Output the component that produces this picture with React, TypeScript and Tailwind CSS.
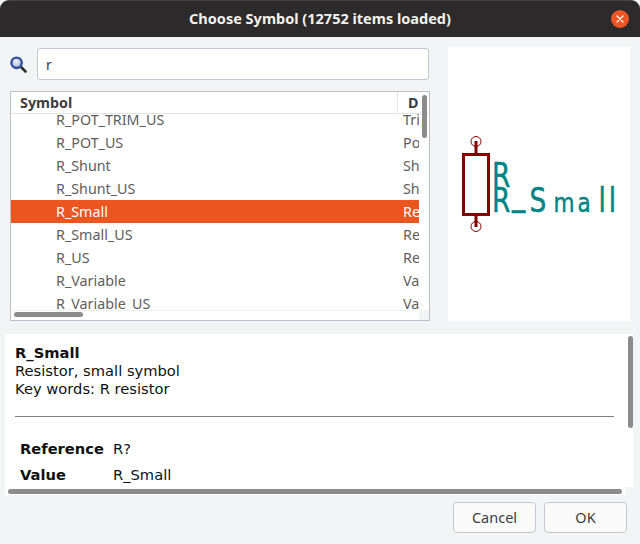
import React from 'react';

const rows = [
  { name: 'R_POT_TRIM_US', desc: 'Trimmer' },
  { name: 'R_POT_US', desc: 'Potentiometer' },
  { name: 'R_Shunt', desc: 'Shunt' },
  { name: 'R_Shunt_US', desc: 'Shunt' },
  { name: 'R_Small', desc: 'Resistor' },
  { name: 'R_Small_US', desc: 'Resistor' },
  { name: 'R_US', desc: 'Resistor' },
  { name: 'R_Variable', desc: 'Variable' },
  { name: 'R_Variable_US', desc: 'Variable' },
];

const uiFont = "font-['Noto_Sans','Open_Sans',sans-serif]";

const SearchIcon = () => (
  <svg width="17" height="17" viewBox="0 0 17 17" className="shrink-0">
    <defs>
      <radialGradient id="lens" cx="45%" cy="40%" r="60%">
        <stop offset="0%" stopColor="#f2f5fb" />
        <stop offset="60%" stopColor="#c3d0ea" />
        <stop offset="100%" stopColor="#6f8ccb" />
      </radialGradient>
    </defs>
    <line x1="10.500" y1="10.500" x2="15.500" y2="15.500" stroke="#2b2b2b" strokeWidth="2.600" strokeLinecap="round" />
    <circle cx="6.600" cy="6.800" r="5.200" fill="url(#lens)" stroke="#34519f" strokeWidth="2.400" />
  </svg>
);

const SymbolPreview = () => (
  <svg width="182" height="274" viewBox="0 0 182 274">
    <circle cx="28" cy="94.500" r="5" fill="none" stroke="#840000" strokeWidth="1" />
    <circle cx="28" cy="179.500" r="5" fill="none" stroke="#840000" strokeWidth="1" />
    <line x1="28" y1="94" x2="28" y2="107" stroke="#840000" strokeWidth="3" />
    <line x1="28" y1="167" x2="28" y2="180" stroke="#840000" strokeWidth="3" />
    <rect x="15.500" y="107.500" width="25" height="60" fill="none" stroke="#840000" strokeWidth="3" />
    <g fill="#008484" stroke="#008484" strokeWidth="0.500" fontFamily="'DejaVu Sans', sans-serif" fontSize="33" transform="scale(0.8 1)">
      <text x="55" y="140">R</text>
      <text y="165">
        <tspan x="55">R</tspan>
        <tspan x="80" dy="-7">_</tspan>
        <tspan x="102" dy="7">S</tspan>
        <tspan x="132" fontSize="27">m</tspan>
        <tspan x="162" fontSize="27">a</tspan>
        <tspan x="188">l</tspan>
        <tspan x="201">l</tspan>
      </text>
    </g>
  </svg>
);

export default function App() {
  return (
    <div className={`w-[640px] h-[544px] flex flex-col bg-[#f3f4f6] overflow-hidden ${uiFont}`}>
      {/* Title bar */}
      <div className="relative h-[37px] shrink-0 flex items-center justify-center bg-[#2c2a2a] rounded-t-[9px] border-t border-[#454343]">
        <span className="text-[14.500px] font-bold text-[#f4f2ef]">Choose Symbol (12752 items loaded)</span>
        <div className="absolute right-[11px] top-[9px] w-[18px] h-[18px] rounded-full bg-[#ee5522] flex items-center justify-center">
          <svg width="8" height="8" viewBox="0 0 8 8">
            <path d="M1 1L7 7M7 1L1 7" stroke="#ffffff" strokeWidth="1.200" strokeLinecap="round" />
          </svg>
        </div>
      </div>

      {/* Search, list and preview */}
      <div className="flex h-[284px] shrink-0 pl-[10px] pr-[10px] pt-[10px]">
        <div className="w-[420px] flex flex-col">
          <div className="flex items-center h-[33px] mt-[1px] mr-[1px]">
            <SearchIcon />
            <div className="ml-[10px] flex-1 h-[32px] bg-white border border-[#c2c6ce] rounded-[3px] flex items-center px-[8px] text-[14px] text-[#3d3d3d]">
              r
            </div>
          </div>
          <div className="relative mt-[10px] h-[231px] bg-white border border-[#bcc0c8] overflow-hidden text-[14.300px]">
            <div className="flex h-[22px] border-b border-[#e4e4e4] font-bold text-[#3d3d3d] pr-[10px]">
              <div className="w-[387px] pl-[9px] leading-[21px] border-r border-[#e4e4e4]">Symbol</div>
              <div className="pl-[10px] leading-[21px] overflow-hidden">D</div>
            </div>
            <div className="h-[196px] overflow-hidden mr-[10px]">
              <div className="-mt-[6px]">
                {rows.map(row => (
                  <div
                    key={row.name}
                    className={`flex h-[23px] leading-[23px] ${row.name === 'R_Small' ? 'bg-[#eb5620] text-white' : 'text-[#5e5e5e]'}`}
                  >
                    <div className="w-[392px] pl-[45px] whitespace-nowrap">{row.name}</div>
                    <div className="flex-1 overflow-hidden whitespace-nowrap">{row.desc}</div>
                  </div>
                ))}
              </div>
            </div>
            <div className="h-[11px] border-t border-[#efefef] mr-[10px]" />
            <div className="absolute right-0 bottom-0 w-[10px] h-[10px] bg-[#f3f4f6]" />
            <div className="absolute right-[2px] top-[3px] w-[5px] h-[43px] rounded-full bg-[#8c8c8c]" />
            <div className="absolute left-[3px] bottom-[3px] w-[69px] h-[5px] rounded-full bg-[#8c8c8c]" />
          </div>
        </div>
        <div className="ml-[18px] w-[182px] h-[274px] bg-white">
          <SymbolPreview />
        </div>
      </div>

      {/* Details */}
      <div className="relative mt-[13px] ml-[5px] w-[628px] h-[161px] shrink-0 bg-white overflow-hidden font-['DejaVu_Sans',sans-serif] text-[14.700px] text-[#111111]">
        <div className="pl-[10px] pt-[10px] leading-[18px]">
          <div className="font-bold">R_Small</div>
          <div>Resistor, small symbol</div>
          <div>Key words: R resistor</div>
        </div>
        <div className="ml-[10px] mr-[19px] mt-[18px] h-px bg-[#808080]" />
        <div className="flex mt-[19px] pl-[15px] h-[26px] leading-[26px]">
          <div className="w-[93px] font-bold">Reference</div>
          <div>R?</div>
        </div>
        <div className="flex pl-[15px] h-[26px] leading-[26px]">
          <div className="w-[93px] font-bold">Value</div>
          <div>R_Small</div>
        </div>
        <div className="absolute right-0 bottom-0 w-[8px] h-[8px] bg-[#f3f4f6]" />
        <div className="absolute right-0 top-[2px] w-[5px] h-[92px] rounded-full bg-[#8c8c8c]" />
        <div className="absolute left-[3px] bottom-[1px] w-[614px] h-[5px] rounded-full bg-[#8c8c8c]" />
      </div>

      {/* Buttons */}
      <div className="flex justify-end gap-[8px] pr-[13px] mt-[7px]">
        <button className="w-[83px] h-[31px] bg-[#fafafb] border border-[#c4c8d0] rounded-[4px] text-[14.500px] leading-[27px] text-[#3d3d3d]">Cancel</button>
        <button className="w-[83px] h-[31px] bg-[#fafafb] border border-[#c4c8d0] rounded-[4px] text-[14.500px] leading-[27px] text-[#3d3d3d]">OK</button>
      </div>
    </div>
  );
}
